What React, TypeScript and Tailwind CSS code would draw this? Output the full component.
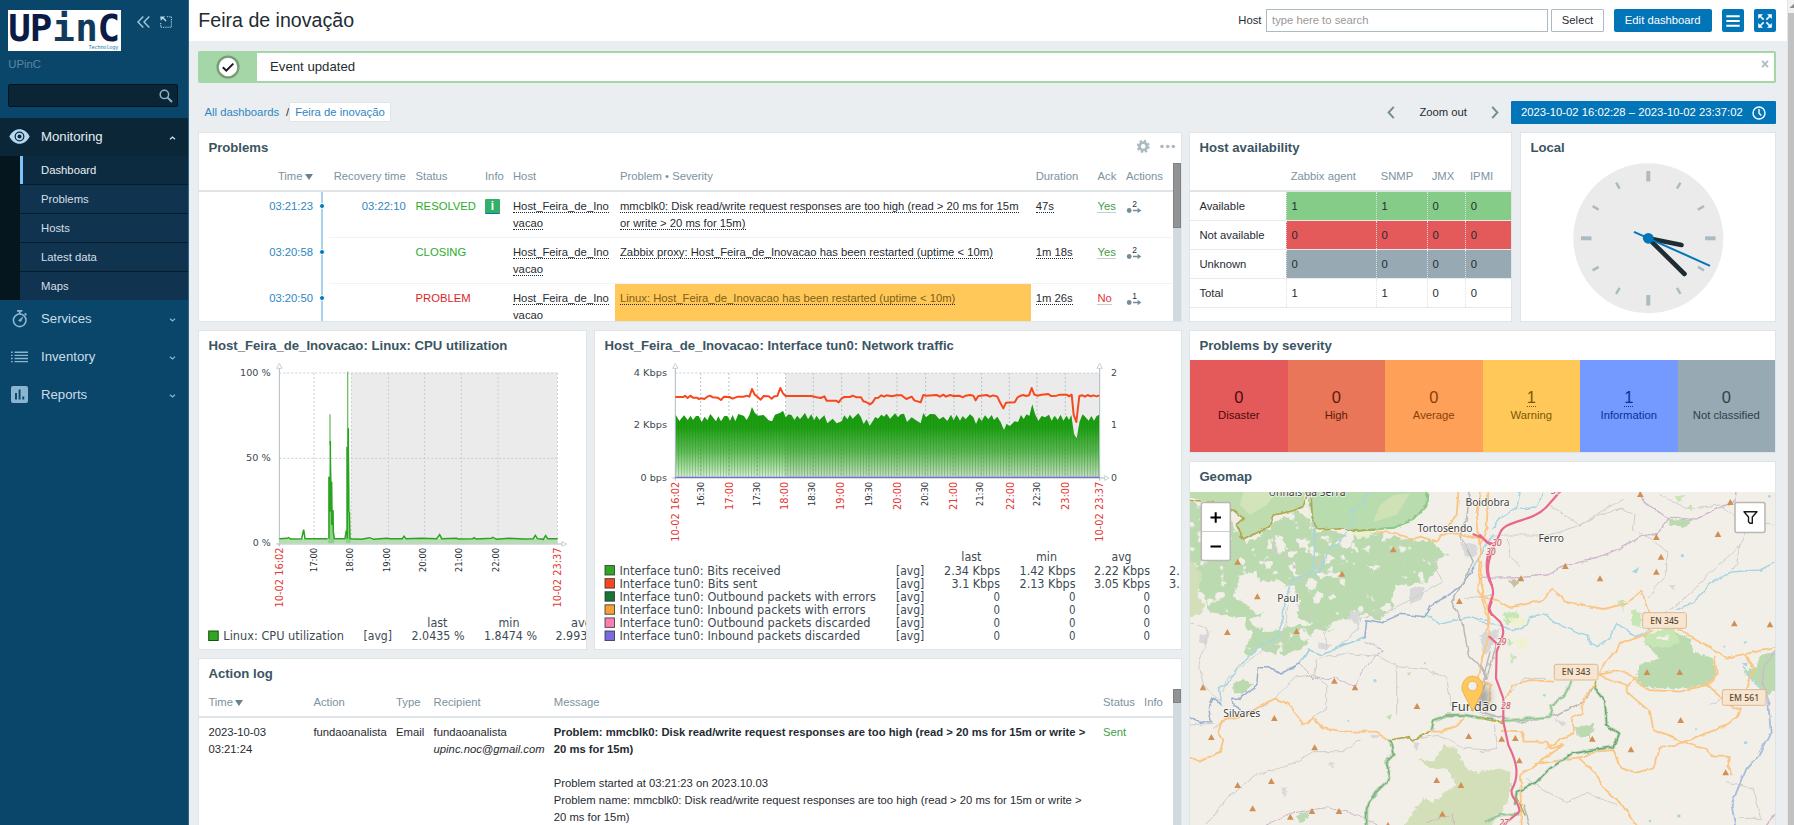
import React from "react";

type Pt = [number, number];

const F = "DejaVu Sans, sans-serif";

function Label({ x, x2, y, s = 12, fill = "#3d4a52", children }: { x: number; x2: number; y: number; s?: number; fill?: string; children: string }) {
  return (
    <text x={x} y={y} fontSize={s} fill={fill} fontFamily={F} textLength={x2 - x} lengthAdjust="spacingAndGlyphs">
      {children}
    </text>
  );
}

function VLabel({ x, y, len, s, fill = "#1f2c33", children }: { x: number; y: number; len: number; s: number; fill?: string; children: string }) {
  return (
    <text transform={`translate(${x} ${y}) rotate(-90)`} fontSize={s} fill={fill} fontFamily={F} textLength={len} lengthAdjust="spacingAndGlyphs">
      {children}
    </text>
  );
}

function Widget({ title, className = "", titleClass = "h-[28px] pt-[6px]", children, tools }: { title: string; className?: string; titleClass?: string; children?: React.ReactNode; tools?: React.ReactNode }) {
  return (
    <section className={`flex shrink-0 flex-col overflow-hidden border border-[#dfe4e7] bg-white ${className}`}>
      <div className={`flex shrink-0 justify-between pl-[9.4px] ${titleClass}`}>
        <h4 className="text-[13.17px] leading-[18px] font-bold whitespace-nowrap text-[#3c5563]">{title}</h4>
        {tools}
      </div>
      {children}
    </section>
  );
}

/* ---------- sidebar ---------- */

function Chevron({ up = false }: { up?: boolean }) {
  return (
    <svg width="7" height="6" viewBox="0 0 7 6" className="mt-[2px] mr-[12px] ml-auto" fill="none" stroke={up ? "#d5e6f1" : "#8db5cf"} strokeWidth="1.2">
      <path d={up ? "M1 4.2 3.5 2 6 4.2" : "M1 1.8 3.5 4 6 1.8"} />
    </svg>
  );
}

function Sidebar() {
  const sub = ["Problems", "Hosts", "Latest data", "Maps"];
  return (
    <aside className="flex w-[189px] shrink-0 flex-col border-r border-[#2d6385] bg-[#0a466a]">
      <div className="flex h-[51px] items-start pt-[10px] pl-[8px]">
        <svg width="113" height="41" viewBox="0 0 113 41">
          <rect width="113" height="41" fill="#fff" />
          <g fontFamily="DejaVu Sans Mono, monospace" fontWeight="bold" fontSize="37.5">
            <text x="0.3" y="31.3" fill="#0a1b45">U</text>
            <text x="21.8" y="31.3" fill="#0a1b45">P</text>
            <text x="44.3" y="31.3" fill="#123a5c">i</text>
            <text x="67.3" y="31.3" fill="#123a5c">n</text>
            <text x="89.5" y="31.3" fill="#0a1b45">C</text>
          </g>
          <text x="80.5" y="38.8" fontSize="5.4" fontFamily="DejaVu Sans Mono, monospace" fill="#2c7fb8" textLength="30">Technology</text>
        </svg>
        <svg width="13" height="12" viewBox="0 0 13 12" className="mt-[5.5px] ml-[16px]" fill="none" stroke="#a5c9e0" strokeWidth="1.4">
          <path d="M6.3.6 1 6l5.3 5.4M12.3.6 7 6l5.3 5.4" />
        </svg>
        <svg width="12" height="12" viewBox="0 0 12 12" className="mt-[5.5px] ml-[10px]">
          <path d="M.2.4h5.2L3.8 1.8l2.8 2.6-1 1-2.8-2.7L.8 4.8z" fill="#b8d6e8" />
          <path d="M7 .8h4.4V11.3H.7V6" fill="none" stroke="#b8d6e8" strokeWidth="1.1" strokeDasharray="1.2 1" />
        </svg>
      </div>
      <div className="mt-[5px] h-[17px] pl-[8.3px] text-[11.3px] leading-[17px] text-[#5c86a1]">UPinC</div>
      <div className="mt-[11px] ml-[8px] flex h-[23px] w-[170px] items-center justify-end rounded-[2px] border border-[#03141f] bg-[#0a2535] pr-[4px]">
        <svg width="14" height="14" viewBox="0 0 14 14" fill="none" stroke="#8fb3ca">
          <circle cx="5.4" cy="5.4" r="4.2" strokeWidth="1.5" />
          <path d="M8.6 8.6 13 13" strokeWidth="2" />
        </svg>
      </div>
      <div className="mt-[11px] flex h-[38px] items-center bg-[#0b2737] pl-[9px] text-[13.2px] text-[#e6eef4]">
        <svg width="21" height="15" viewBox="0 0 21 15" className="mr-[11px] mb-[1px]">
          <path d="M.3 7.5C3 2.5 6.5.2 10.5.2s7.5 2.3 10.2 7.3C18 12.5 14.5 14.8 10.5 14.8S3 12.5.3 7.5z" fill="#b4d8f2" />
          <circle cx="10.5" cy="7.5" r="4.9" fill="#0b2737" />
          <circle cx="10.5" cy="7.5" r="3.7" fill="#b4d8f2" />
          <circle cx="10.5" cy="7.5" r="2" fill="#0b2737" />
        </svg>
        Monitoring
        <Chevron up />
      </div>
      <div className="flex flex-col bg-[#05161f] pl-[20px] text-[11.3px] text-[#d4dfe7]">
        <div className="flex h-[28px] items-center border-l-[3px] border-[#7cc4fa] bg-[#0c2b41] pl-[18px] text-[#e6eef4]">Dashboard</div>
        {sub.map((s) => (
          <div key={s} className="flex h-[29px] items-center border-t border-[#061b29] bg-[#10344f] pl-[21px]">{s}</div>
        ))}
      </div>
      <div className="flex flex-col pt-[0.5px] text-[13.2px] text-[#cbdde9]">
        <div className="flex h-[37.7px] items-center pl-[11px]">
          <svg width="18" height="18" viewBox="0 0 18 18" className="mr-[12px]" fill="none" stroke="#8ab4d0">
            <circle cx="8.7" cy="10.3" r="6.3" strokeWidth="1.6" />
            <path d="M6 .9h5.4M8.7 1v3M13.7 3.4l1.7 1.7" strokeWidth="1.8" />
            <path d="M11.6 7.3 9.8 11.3 7.6 10.6z" fill="#8ab4d0" />
          </svg>
          Services
          <Chevron />
        </div>
        <div className="flex h-[37.7px] items-center pl-[11px]">
          <svg width="18" height="12" viewBox="0 0 18 12" className="mr-[12px]" stroke="#8ab4d0" strokeWidth="1.4">
            <path d="M0 1.3h1.7M0 4.4h1.7M0 7.5h1.7M0 10.6h1.7M3.5 1.3H17M3.5 4.4H17M3.5 7.5H17M3.5 10.6H17" />
          </svg>
          Inventory
          <Chevron />
        </div>
        <div className="flex h-[37.7px] items-center pl-[11px]">
          <svg width="18" height="17" viewBox="0 0 18 17" className="mr-[12px]">
            <rect width="17" height="17" rx="2" fill="#8ab4d0" />
            <path d="M5 7v6.5M8.6 3.5v10M12.3 10.5v3" stroke="#0a466a" strokeWidth="1.9" />
          </svg>
          Reports
          <Chevron />
        </div>
      </div>
    </aside>
  );
}

/* ---------- problems ---------- */

const dotted = "border-b border-dotted border-[#1f2c33]";

function ProblemRow({ time, rec, status, statusClass, info, problem, dur, ack, ackClass, n, warn }: {
  time: string; rec?: string; status: string; statusClass: string; info?: boolean; problem: React.ReactNode; dur: string; ack: string; ackClass: string; n: string; warn?: boolean;
}) {
  const c = "border-b border-[#f0f2f3] pt-[5.5px]";
  return (
    <div className="grid h-[46px] grid-cols-[114px_16px_76.7px_79.3px_28px_102px_416px_66.5px_28.5px_46.5px] leading-[17px]">
      <div className="pt-[5.5px] text-right text-[#2f86c2]">{time}</div>
      <div className="flex items-start pl-[8px]">
        <div className="flex h-full w-[2px] justify-center bg-[#a9d1ec]">
          <div className="mt-[11px] h-[6px] w-[6px] shrink-0 rounded-full border border-white bg-[#0275b8]" />
        </div>
      </div>
      <div className={`${c} text-right text-[#2f86c2]`}>{rec}</div>
      <div className={`${c} pl-[9.8px] ${statusClass}`}>{status}</div>
      <div className={c}>
        {info && (
          <div className="mt-px flex h-[15px] w-[15px] justify-center rounded-[1px] border-b border-[#0275b8] bg-[#34af67] text-[12px] leading-[15px] font-bold text-white">i</div>
        )}
      </div>
      <div className={c}>
        <span className={dotted}>Host_Feira_de_Ino<br />vacao</span>
      </div>
      <div className={`${c} pl-[5px] whitespace-nowrap ${warn ? "bg-[#ffc859] text-[#7d5f17]" : ""}`}>
        <span className={dotted}>{problem}</span>
      </div>
      <div className={`${c} pl-[4.7px]`}><span className={dotted}>{dur}</span></div>
      <div className={c}><span className={`border-b border-[#c3cdd3] ${ackClass}`}>{ack}</span></div>
      <div className={c}>
        <svg width="17" height="15" viewBox="0 0 17 15" className="mt-[2px]">
          <text x="6.2" y="6.8" fontSize="8.5" fontFamily="Liberation Sans, sans-serif" fill="#1f2c33">{n}</text>
          <circle cx="3.2" cy="10.5" r="2.4" fill="#768d99" />
          <path d="M7 10.5h6" stroke="#768d99" strokeWidth="1.5" />
          <path d="M11.6 7.8 15.3 10.5 11.6 13.2z" fill="#768d99" />
        </svg>
      </div>
    </div>
  );
}

function Problems() {
  return (
    <Widget
      title="Problems"
      className="h-[190px]"
      titleClass="h-[30px] pt-[6px]"
      tools={
        <svg width="44" height="18" viewBox="0 0 44 18" fill="none" stroke="#acbbc2">
          <circle cx="6.2" cy="7.4" r="3.7" strokeWidth="2.8" />
          <circle cx="6.2" cy="7.4" r="5.6" strokeWidth="2" strokeDasharray="2.3 2.098" />
          <g fill="#acbbc2" stroke="none"><circle cx="25" cy="7.5" r="1.8" /><circle cx="30.7" cy="7.5" r="1.8" /><circle cx="36.3" cy="7.5" r="1.8" /></g>
        </svg>
      }
    >
      <div className="flex min-h-0 flex-1">
        <div className="w-[973.5px]">
          <div className="grid h-[29px] grid-cols-[114px_16px_76.7px_79.3px_28px_102px_416px_66.5px_28.5px_46.5px] border-b-2 border-[#dfe4e7] pt-[5px] leading-[17px] text-[#7c929e]">
            <div className="flex items-start justify-end gap-[2px]">Time<span className="mt-[6px] mr-[0.5px] border-x-4 border-t-[6px] border-x-transparent border-t-[#6a8290]" /></div>
            <div />
            <div className="text-right whitespace-nowrap">Recovery time</div>
            <div className="pl-[9.8px]">Status</div>
            <div>Info</div>
            <div>Host</div>
            <div className="pl-[5px]">Problem • Severity</div>
            <div className="pl-[4.7px]">Duration</div>
            <div>Ack</div>
            <div>Actions</div>
          </div>
          <ProblemRow time="03:21:23" rec="03:22:10" status="RESOLVED" statusClass="text-[#2aad2a]" info problem={<>mmcblk0: Disk read/write request responses are too high (read &gt; 20 ms for 15m <br />or write &gt; 20 ms for 15m)</>} dur="47s" ack="Yes" ackClass="text-[#429e47]" n="2" />
          <ProblemRow time="03:20:58" status="CLOSING" statusClass="text-[#2aad2a]" problem="Zabbix proxy: Host_Feira_de_Inovacao has been restarted (uptime < 10m)" dur="1m 18s" ack="Yes" ackClass="text-[#429e47]" n="2" />
          <ProblemRow time="03:20:50" status="PROBLEM" statusClass="text-[#dc1f1f]" problem="Linux: Host_Feira_de_Inovacao has been restarted (uptime < 10m)" dur="1m 26s" ack="No" ackClass="text-[#e33734]" n="1" warn />
        </div>
        <div className="flex-1 bg-[#d2dae0]"><div className="h-[65px] border border-[#7f8183] bg-[#919395]" /></div>
      </div>
    </Widget>
  );
}

/* ---------- host availability / clock ---------- */

function Availability() {
  const rows: [string, string, string[]][] = [
    ["Available", "bg-[#86cc89]", ["1", "1", "0", "0"]],
    ["Not available", "bg-[#e45959]", ["0", "0", "0", "0"]],
    ["Unknown", "bg-[#97aab3]", ["0", "0", "0", "0"]],
    ["Total", "", ["1", "1", "0", "0"]],
  ];
  return (
    <Widget title="Host availability" className="w-[323px]" titleClass="h-[30px] pt-[6px]">
      <div className="grid h-[29px] shrink-0 grid-cols-[96px_90px_51px_38.3px_1fr] border-b-2 border-[#dfe4e7] pt-[5px] leading-[17px] text-[#7c929e]">
        <div />
        <div className="pl-[4.7px]">Zabbix agent</div>
        <div className="pl-[4.7px]">SNMP</div>
        <div className="pl-[4.7px]">JMX</div>
        <div className="pl-[4.7px]">IPMI</div>
      </div>
      {rows.map(([name, bg, v]) => (
        <div key={name} className="grid h-[29.1px] shrink-0 grid-cols-[96px_90px_51px_38.3px_1fr] border-b border-[#e6eaec] leading-[29px]">
          <div className="h-[28.1px] pl-[9.4px]">{name}</div>
          {v.map((t, i) => (
            <div key={i} className={`h-[28.1px] border-l border-dotted border-[#dbe2e6] pl-[4.5px] ${bg}`}>{t}</div>
          ))}
        </div>
      ))}
    </Widget>
  );
}

function Clock() {
  const ticks = Array.from({ length: 12 }, (_, i) => i);
  return (
    <Widget title="Local" className="flex-1" titleClass="h-[28px] pt-[6px]">
      <svg width="254" height="160" viewBox="1521 161 254 160">
        <circle cx="1648.3" cy="238.3" r="75" fill="#ebebeb" />
        {ticks.map((i) => (
          <path key={i} transform={`rotate(${i * 30} 1648.3 238.3)`} d={i % 3 === 0 ? "M1648.3 171v10.5" : "M1648.3 174v7"} stroke="#acbbc2" strokeWidth={i % 3 === 0 ? 4 : 2.5} />
        ))}
        <g stroke="#1f2c33" strokeLinecap="round" strokeWidth="4.6">
          <path d="M1648.3 238.3 1681.5 245" />
          <path d="M1648.3 238.3 1684.5 274" />
        </g>
        <path d="M1634 231.8 1710 265.8" stroke="#0275b8" strokeWidth="2" />
        <circle cx="1648.3" cy="238.3" r="5.4" fill="#0275b8" />
      </svg>
    </Widget>
  );
}

/* ---------- graphs ---------- */

function CpuGraph() {
  const v = [372, 484, 595, 704, 814, 924];
  const hours: [string, number][] = [["17:00", 380], ["18:00", 489], ["19:00", 599], ["20:00", 709], ["21:00", 817], ["22:00", 928]];
  return (
    <svg width="387" height="289" viewBox="199 360 387 289">
      <g transform="translate(190 325) scale(.333333)">
        <rect x="484" y="143" width="617" height="513" fill="#ebebeb" />
        <g stroke="#c4ced3" strokeWidth="3" strokeDasharray="6 6">
          <path d="M268 144H1101M268 400H1101M1102 144V655" />
          {v.map((x) => <path key={x} d={`M${x} 144V655`} />)}
        </g>
        <g stroke="#acbbc2" strokeWidth="3" fill="none">
          <path d="M268 130V664M259 657H1116" />
          <path d="M260 130 268 115 276 130zM1116 650 1130 657 1116 664z" fill="#fff" strokeWidth="2" />
        </g>
        <rect x="268" y="642" width="834" height="14" fill="#b8dcb5" />
        <path d="M415 455H419L421 350 426 470 432 640V655H415zM468 365H472L476 310 481 560V655H468z" fill="#8fd08b" />
        <path d="M420 268V360M473 140V370" stroke="#6cc265" strokeWidth="4" />
        <path d="M268 641 292 640 296 638 302 642 335 641 341 614 345 641 413 641M417 455V641M421 348V560M425 470V600M429 555 430 620 433 641 465 641 469 616M472 366V641M475 310V560M478 560 480 641 515 643 539 638 551 643 590 640 600 641 637 641 642 634 648 641 695 640 740 641 749 629 755 641 800 640 805 642 848 641 853 638 858 642 905 640 908 637 920 643 957 640 1000 642 1030 641 1036 631 1042 641 1060 643 1067 632 1073 641 1103 641" fill="none" stroke="#2aa31f" strokeWidth="4.5" />
      </g>
      <Label x={240} x2={270.7} y={376} s={9.3}>100 %</Label>
      <Label x={246} x2={270.7} y={460.5} s={9.3}>50 %</Label>
      <Label x={252.7} x2={270.7} y={546} s={9.3}>0 %</Label>
      {hours.map(([t, x]) => <VLabel key={t} x={190 + x / 3} y={572.3} len={24.6} s={8.5}>{t}</VLabel>)}
      <VLabel x={282.5} y={607.5} len={60} s={10} fill="#e33734">10-02 16:02</VLabel>
      <VLabel x={560.5} y={607.5} len={60} s={10} fill="#e33734">10-02 23:37</VLabel>
      <rect x="208.7" y="631" width="9.5" height="9.5" fill="#33a523" stroke="#14530c" />
      <Label x={223.3} x2={344} y={640} s={11.8}>Linux: CPU utilization</Label>
      <Label x={363.5} x2={392} y={640} s={11.8}>[avg]</Label>
      <Label x={427.3} x2={447.5} y={627} s={11.8}>last</Label>
      <Label x={498.5} x2={519.5} y={627} s={11.8}>min</Label>
      <Label x={571} x2={592} y={627} s={11.8}>avg</Label>
      <Label x={411.5} x2={464.5} y={640} s={11.8}>2.0435 %</Label>
      <Label x={484} x2={537} y={640} s={11.8}>1.8474 %</Label>
      <Label x={555.5} x2={608.5} y={640} s={11.8}>2.9933 %</Label>
    </svg>
  );
}

const sent =
  "16,111 40,111 45,107 53,114 61,107 69,113 82,113 86,117 95,115 103,117 112,110 120,107 128,112 143,113 153,120 162,110 178,111 188,116 203,110 222,110 230,107 238,110 246,87 254,104 262,110 272,119 281,108 296,109 305,116 313,109 322,108 331,84 339,100 347,108 424,108 440,112 452,114 463,109 470,122 498,122 506,127 515,115 523,111 540,111 548,107 560,112 573,112 580,124 588,126 600,133 608,127 616,114 625,113 634,106 642,110 650,106 665,109 680,106 695,106 700,110 709,117 725,110 733,121 752,127 760,105 768,107 800,105 810,110 820,104 828,110 840,105 850,108 868,107 878,112 887,107 900,105 910,107 917,121 925,108 950,105 960,110 970,106 982,110 990,127 1000,145 1008,128 1034,127 1043,112 1052,107 1060,105 1068,108 1077,106 1085,84 1093,104 1101,107 1115,104 1135,102 1143,108 1160,107 1170,104 1190,104 1197,109 1205,104 1211,165 1219,186 1228,108 1237,106 1245,110 1253,105 1262,109 1270,106 1280,109 1288,106";

const received =
  "16,353 16,163 28,183 42,166 53,180 62,167 69,180 78,168 86,168 95,186 104,170 112,181 121,162 138,184 145,169 153,184 163,168 172,168 180,182 188,165 196,184 205,162 222,168 230,180 238,166 246,141 254,158 264,167 281,165 296,181 306,184 315,164 331,158 339,152 347,172 356,163 365,166 373,180 382,167 390,178 405,159 414,178 424,163 432,181 440,167 448,180 463,166 472,190 488,176 500,190 515,184 523,166 532,178 540,164 548,176 565,160 573,172 581,192 590,178 599,198 608,184 616,171 624,176 634,164 642,170 650,161 660,176 668,168 675,160 684,172 692,163 702,161 711,186 725,172 740,182 752,190 760,159 768,172 780,162 795,163 808,178 820,170 832,183 843,164 851,181 860,164 870,182 878,168 887,178 900,163 910,172 918,192 927,172 935,183 945,166 955,178 965,165 972,180 982,170 992,187 1002,210 1010,191 1019,199 1034,184 1044,186 1053,165 1061,177 1070,163 1078,168 1087,133 1095,162 1105,183 1115,168 1125,172 1137,164 1145,182 1154,167 1163,180 1172,164 1180,182 1190,167 1197,180 1204,165 1212,222 1220,235 1229,184 1238,163 1246,171 1256,182 1264,168 1272,182 1280,168 1288,164 1288,353";

function NetGraph() {
  const nx = (x: number) => 590 + x / 2.613;
  const black: Pt[] = [[297, 16], [444, 17], [589, 18], [736, 19], [884, 20], [1028, 21], [1175, 22]];
  const red: Pt[] = [[373, 17], [518, 18], [665, 19], [813, 20], [959, 21], [1107, 22], [1252, 23]];
  const rows: [string, string, number, string[], number][] = [
    ["Interface tun0: Bits received", "#33a523", 498, ["2.34 Kbps", "1.42 Kbps", "2.22 Kbps"], 56],
    ["Interface tun0: Bits sent", "#f7481d", 437, ["3.1 Kbps", "2.13 Kbps", "3.05 Kbps"], 56],
    ["Interface tun0: Outbound packets with errors", "#1c7336", 747, ["0", "0", "0"], 6.5],
    ["Interface tun0: Inbound packets with errors", "#f7a033", 720, ["0", "0", "0"], 6.5],
    ["Interface tun0: Outbound packets discarded", "#fc7eb0", 733, ["0", "0", "0"], 6.5],
    ["Interface tun0: Inbound packets discarded", "#7c6ae0", 706, ["0", "0", "0"], 6.5],
  ];
  return (
    <svg width="585" height="289" viewBox="595 360 585 289">
      <defs>
        <linearGradient id="fade" gradientUnits="userSpaceOnUse" x1="0" y1="160" x2="0" y2="353">
          <stop offset="0" stopColor="#1a9c0f" />
          <stop offset=".22" stopColor="#1e9e14" />
          <stop offset=".6" stopColor="#2aa31f" stopOpacity=".72" />
          <stop offset="1" stopColor="#33a523" stopOpacity=".17" />
        </linearGradient>
        <pattern id="bars" patternUnits="userSpaceOnUse" x="16" width="8.4" height="400">
          <rect width="3" height="400" fill="#128a08" opacity=".35" />
        </pattern>
      </defs>
      <g transform="translate(670 360) scale(.333333)">
        <rect x="347" y="39" width="942" height="314" fill="#ebebeb" />
        <g stroke="#c4ced3" strokeWidth="3" strokeDasharray="6 6">
          <path d="M16 39H1288" />
          {[92, 177, 262, 347, 430, 515, 597, 681, 767, 852, 935, 1018, 1101, 1186].map((x) => <path key={x} d={`M${x} 39V353`} stroke="#b7c4ca" />)}
        </g>
        <polygon points={received} fill="url(#fade)" />
        <polygon points={received} fill="url(#bars)" />
        <g stroke="#acbbc2" strokeWidth="3" fill="#fff">
          <path d="M16 25V362M1289 25V362M7 354H1304" fill="none" />
          <path d="M8 25 16 10 24 25zM1281 25 1289 10 1297 25zM1304 347 1317 354 1304 361z" strokeWidth="2" />
        </g>
        <polyline points={sent} fill="none" stroke="#f7481d" strokeWidth="6" strokeLinejoin="round" />
        <path d="M16 352H1289" stroke="#7c6ae0" strokeWidth="3.5" />
      </g>
      <Label x={633.7} x2={667} y={376} s={9.5}>4 Kbps</Label>
      <Label x={633.7} x2={667} y={428} s={9.5}>2 Kbps</Label>
      <Label x={640.5} x2={667} y={480.5} s={9.5}>0 bps</Label>
      <Label x={1111} x2={1117} y={376} s={9.5}>2</Label>
      <Label x={1111} x2={1117} y={428} s={9.5}>1</Label>
      <Label x={1111} x2={1117} y={480.5} s={9.5}>0</Label>
      {black.map(([x, t]) => <VLabel key={x} x={nx(x)} y={506.3} len={24.6} s={8.3}>{`${t}:30`}</VLabel>)}
      {red.map(([x, t]) => <VLabel key={x} x={nx(x)} y={510} len={28.3} s={9.8} fill="#e33734">{`${t}:00`}</VLabel>)}
      <VLabel x={678.8} y={541.8} len={60} s={10} fill="#e33734">10-02 16:02</VLabel>
      <VLabel x={1102.8} y={541.8} len={60} s={10} fill="#e33734">10-02 23:37</VLabel>
      <Label x={961.3} x2={981.5} y={560.5} s={11.8}>last</Label>
      <Label x={1036} x2={1057} y={560.5} s={11.8}>min</Label>
      <Label x={1111.5} x2={1131.5} y={560.5} s={11.8}>avg</Label>
      {rows.map(([name, color, end, vals, w], i) => {
        const y = 574.5 + i * 13.1;
        return (
          <g key={name}>
            <rect x="605" y={y - 9} width="9.5" height="9.5" fill={color} stroke="#1f2c33" strokeOpacity=".75" />
            <Label x={619.5} x2={nx(end)} y={y} s={11.8}>{name}</Label>
            <Label x={896} x2={924.3} y={y} s={11.8}>[avg]</Label>
            {vals.map((t, k) => {
              const e = [1000, 1075.5, 1150][k];
              return <Label key={k} x={e - (t === "3.1 Kbps" ? 48.5 : w)} x2={e} y={y} s={11.8}>{t}</Label>;
            })}
          </g>
        );
      })}
      <Label x={1169} x2={1187} y={574.5} s={11.8}>2.8</Label>
      <Label x={1169} x2={1187} y={587.6} s={11.8}>3.4</Label>
    </svg>
  );
}

/* ---------- severity ---------- */

function Severity() {
  const items: [string, string, string][] = [
    ["0", "Disaster", "bg-[#e45959] text-[#4b0c0c]"],
    ["0", "High", "bg-[#e97659] text-[#5a1c0b]"],
    ["0", "Average", "bg-[#ffa059] text-[#8a3f07]"],
    ["1", "Warning", "bg-[#ffc859] text-[#7d5706]"],
    ["1", "Information", "bg-[#7499ff] text-[#0c2f9c]"],
    ["0", "Not classified", "bg-[#97aab3] text-[#30404a]"],
  ];
  return (
    <Widget title="Problems by severity" className="h-[123px]" titleClass="h-[29px] pt-[6px]">
      <div className="grid flex-1 grid-cols-6">
        {items.map(([n, l, c]) => (
          <div key={l} className={`flex flex-col items-center pt-[27.5px] ${c}`}>
            <span className={`h-[19px] text-[16.5px] leading-[19px] ${n === "1" ? "border-b border-dotted border-current" : ""}`}>{n}</span>
            <span className="leading-[17px]">{l}</span>
          </div>
        ))}
      </div>
    </Widget>
  );
}

/* ---------- geomap ---------- */

const peaksLeft: Pt[] = [[173, 230], [232, 334], [142, 441], [350, 438], [486, 266], [640, 193], [838, 348], [69, 607], [463, 587], [525, 607], [711, 663], [283, 699], [94, 756], [404, 787], [866, 753], [173, 900], [274, 888], [218, 970], [331, 995], [396, 978], [477, 978], [770, 885], [843, 900], [787, 986], [624, 1020]];
const peaksRight: Pt[] = [[481, 27], [751, 51], [529, 156], [714, 147], [543, 215], [529, 260], [256, 243], [123, 280], [360, 280], [763, 415], [870, 418], [501, 561], [599, 561], [602, 705], [65, 761], [106, 759], [337, 761], [453, 793], [118, 826], [737, 862]];

function Peaks({ at }: { at: Pt[] }) {
  return <g fill="#d08f55">{at.map(([x, y]) => <path key={`${x}-${y}`} d={`M${x} ${y - 9} ${x + 10} ${y + 9}H${x - 10}z`} />)}</g>;
}

function Badge({ x, y, w, children }: { x: number; y: number; w: number; children: string }) {
  return (
    <g>
      <rect x={x} y={y} width={w} height="47" rx="5" fill="#f7e5d0" stroke="#dcb996" strokeWidth="3" />
      <text x={x + w / 2} y={y + 33} textAnchor="middle" fontSize="26" fontFamily="Noto Sans, sans-serif" fontWeight="500" fill="#5d4a33">{children}</text>
    </g>
  );
}

const places: [string, number, number, number, number][] = [
  ["Unhais da Serra", 1268.5, 495.7, 77, 10.3],
  ["Tortosendo", 1417.5, 532, 55, 10.3],
  ["Boidobra", 1465.5, 506, 44, 10.3],
  ["Ferro", 1538.5, 541.5, 25.5, 10.3],
  ["Paul", 1277.3, 601.5, 21, 10.3],
  ["Silvares", 1223.3, 717, 37, 10.3],
  ["Fundão", 1451, 710.5, 46, 13],
];

function GeoMap() {
  return (
    <svg width="585" height="333" viewBox="1190 492 585 333" fill="none" strokeLinejoin="round" strokeLinecap="round">
      <defs>
        <filter id="rough" x="-5%" y="-5%" width="110%" height="110%">
          <feTurbulence type="fractalNoise" baseFrequency=".07" numOctaves="3" seed="4" />
          <feDisplacementMap in="SourceGraphic" scale="18" xChannelSelector="R" yChannelSelector="G" />
        </filter>
        <filter id="speckle" x="-5%" y="-5%" width="110%" height="110%">
          <feTurbulence type="fractalNoise" baseFrequency=".028" numOctaves="3" seed="12" result="n" />
          <feColorMatrix in="n" type="matrix" values="0 0 0 0 0  0 0 0 0 0  0 0 0 0 0  14 0 0 0 -8.9" result="holes" />
          <feDisplacementMap in="SourceGraphic" in2="n" scale="36" xChannelSelector="G" yChannelSelector="B" result="edge" />
          <feComposite in="edge" in2="holes" operator="out" />
        </filter>
        <filter id="wiggle" x="-5%" y="-5%" width="110%" height="110%">
          <feTurbulence type="fractalNoise" baseFrequency=".035" numOctaves="2" seed="9" />
          <feDisplacementMap in="SourceGraphic" scale="14" xChannelSelector="R" yChannelSelector="G" />
        </filter>
        <filter id="soft" x="-60%" y="-60%" width="220%" height="220%"><feGaussianBlur stdDeviation="4" /></filter>
      </defs>
      <rect x="1190" y="492" width="585" height="333" fill="#f2efe9" />
      <g transform="translate(1180 485) scale(.333333)">
        <g filter="url(#speckle)">
          <path d="M0 50 70 55 150 85 165 125 190 168 270 130 300 100 350 80 400 105 410 135 500 140 470 175 500 190 520 150 600 140 680 170 740 160 800 210 770 240 740 290 640 300 640 370 600 400 560 390 500 400 440 420 430 440 470 430 400 440 385 470 360 490 330 510 290 510 240 490 210 515 190 500 215 440 190 400 140 390 90 380 80 340 40 300 0 300z" fill="#bcdab0" />
        </g>
        <path d="M30 20H375L370 70 330 80 280 90 265 125 190 165 165 120 190 100 165 80 60 45 30 38z" fill="#bfdcae" />
        <path d="M190 20 180 60 210 90 260 60 290 20z" fill="#d3e3ba" />
        <path d="M395 20H742L740 60 700 105 640 128 520 138 490 128 410 132 397 100z" fill="#b9dcae" />
        <path d="M600 60 640 30 690 25 650 90 580 110z" fill="#cfe2b6" />
        <g filter="url(#rough)">
          <path d="M22 210 65 270 50 330 75 360 60 390 22 400z" fill="#d3dfb8" />
          <g fill="#f2efe9">
            <path d="M180 270 230 260 240 290 300 285 320 300 300 350 270 375 230 390 200 360 165 330z" />
            <path d="M300 310 340 300 360 350 350 395 400 420 350 420 310 430 280 440 250 440 240 400z" />
            <path d="M285 150 310 155 315 200 290 205zM350 160 390 165 380 185 355 185zM440 205 465 220 430 240zM560 240 600 250 575 258zM385 280 405 280 395 320 375 305z" />
          </g>
          <path d="M160 600 190 582 220 600 190 625 160 625zM345 990 385 980 385 1000 360 1018z" fill="#bcdab0" />
          <path d="M710 820 760 830 790 780 830 790 850 840 880 860 940 870 940 1040H660L700 980 730 940 760 950 830 900 800 850 750 850z" fill="#d3dfb8" />
          <path d="M510 145 560 138 590 148 540 162zM375 40 390 60 398 150 387 100z" fill="#eaf0cd" />
        </g>
        <g fill="#d9d8d8" filter="url(#rough)">
          <path d="M690 310 735 305 725 345 690 355zM510 380 545 380 535 420 505 400zM415 470 455 480 440 495 415 490zM60 450 90 440 80 480 58 470zM840 170 890 180 890 210 860 220zM570 745 600 750 580 765zM695 770 720 775 710 795zM445 830 465 835 455 848zM305 905 320 910 312 935z" />
        </g>
        <g filter="url(#wiggle)">
          <g stroke="#cfcecd" strokeWidth="3">
            <path d="M30 412 80 430 75 480 55 530 70 600 120 650M130 620 140 580 190 540 240 500 300 470 320 400 325 310 400 260 450 190 500 150M285 160 280 200 330 230 360 250M350 360 400 400 435 450 440 480M480 480 530 440 540 400 620 380 700 340 790 290 765 250 770 200M420 520 500 505 600 515 650 545 740 555 800 580 815 660M650 545 650 690M400 580 410 520M100 730 140 700 260 660 350 575 400 570 440 600 440 670 400 700M80 1020 140 940 230 870 330 840 400 800 490 800 545 760M720 760 780 750 850 790 930 795M850 340 940 330M30 720 100 715" />
          </g>
          <path d="M260 1018 330 985 440 968 520 985 560 1000 590 1018M360 540 400 580 470 580 525 605 550 550 610 495 555 470M740 1010 820 990 820 1020" stroke="#cdb5cc" strokeWidth="3" strokeDasharray="12 4" />
          <path d="M570 20 545 60 515 80 520 115 480 170 445 190 420 262H400L405 160 385 20M400 262 340 285 312 350 310 400 290 460 240 480 210 510 170 550 140 600 118 605 125 660M940 150 910 190 880 250M930 412 870 395 780 418 740 390" stroke="#a6d5e3" strokeWidth="4.5" />
          <path d="M555 455 490 480 425 510 385 495 360 535" stroke="#a0d2e2" strokeWidth="5" />
          <path d="M880 250 850 295 800 335 750 360 735 395 660 388 600 415 560 407 555 455M360 535 300 567 265 545 235 545 230 600 180 640 155 640 160 665 180 675M125 660 100 640 85 670 95 710 60 712 22 690" stroke="#98b0cf" strokeWidth="4.5" />
          <path d="M870 20 860 100 840 150 880 230 850 290 815 350 850 420 865 510 915 560 915 600 880 650M930 500 915 560" stroke="#bab8b6" strokeWidth="4.5" />
          <path d="M22 815 60 830 120 800 130 765 115 740 125 705 200 690 250 660 285 640 320 655 360 700 370 720 400 700 430 730 500 740 590 740 630 765M740 740 790 740 830 720 850 700M590 140 650 145 690 165 720 155 770 170 780 150 830 145 900 160M835 20 830 90 790 140M900 20 890 80 900 200 895 310 925 400 910 500 895 590 935 600 920 680" stroke="#fbc684" strokeWidth="5.5" />
          <path d="M755 735 760 710 800 690 850 690 940 705M630 765 640 810 620 830 630 880 590 920 560 970 560 1020" stroke="#b8d8b3" strokeWidth="10" />
          <path d="M755 735 760 710 800 690 850 690 940 705M630 765 640 810 620 830 630 880 590 920 560 970 560 1020" stroke="#7dae7f" strokeWidth="4" />
          <path d="M740 60 742 20M740 60 700 105 640 128 520 138" stroke="#8cc986" strokeWidth="6" />
          <path d="M22 42 60 48 110 55 165 80 190 100 167 120 190 165 265 125 280 90 330 80 370 62 385 20M393 20 397 100 412 132 490 128 520 138 580 135M630 765 690 755 700 765 750 740" stroke="#b0aa50" strokeWidth="5" />
        </g>
        <path d="M880 148 910 160 930 178M935 190C915 215 915 270 935 300M935 350 928 370 935 390" stroke="#e8688c" strokeWidth="6.5" />
        <g fill="#a6d5e3"><circle cx="585" cy="587" r="5" /><circle cx="735" cy="535" r="3" /><circle cx="505" cy="707" r="3" /></g>
        <g fill="#bfe0ad"><path d="M618 695 636 688 630 704zM680 565 693 560 688 572z" /></g>
        <Peaks at={peaksLeft} />
      </g>
      <g transform="translate(1480 485) scale(.333333)">
        <g filter="url(#rough)">
          <path d="M490 470 560 430 630 460 640 500 700 520 705 570 690 600 580 610 500 610 470 590 475 540 540 520zM840 510 890 500V620L860 630 830 600 790 560 830 545zM285 725 345 715 330 760 290 750zM560 105 640 100 620 125 570 120z" fill="#bcdab0" />
          <path d="M490 450 580 430 600 470 560 490 500 480zM455 375 485 385 480 430 455 420zM415 345 435 345 430 380zM70 385 110 380 120 400 80 420z" fill="#c6e6b4" />
          <path d="M0 860 50 850 95 860 90 930 60 990 0 1000z" fill="#d3dfb8" />
          <path d="M85 285 120 285 105 310z" fill="#c4c39c" />
          <path d="M85 400 140 400 130 430 100 425zM110 460 145 465 135 495 110 490z" fill="#eff1d0" />
          <path d="M585 35 615 30 600 50zM625 60 640 65 630 80zM95 505 110 515 95 535zM85 460 100 470 85 480z" fill="#c6e6b4" />
          <path d="M0 450 60 430 50 460 20 510 10 500zM565 300 590 300 580 320zM220 700 260 715 250 725z" fill="#d9d8d8" />
          <path d="M535 455 570 450 560 465 530 465z" fill="#f2efe9" />
        </g>
        <g filter="url(#wiggle)">
          <path d="M30 150 70 150 210 150 300 120 430 40M210 60 250 90 300 120M85 160 90 210 120 245M505 335 560 270 560 200 520 165 460 135 465 90 420 70 350 95 300 120M555 385 640 320 690 260 750 210 780 180 800 130 830 110M780 180 770 235 750 255M540 30 620 70 720 60 760 90 880 120M90 620 130 580 200 580M140 880 200 920 260 950 320 925 410 960M740 890 820 910 845 1000 780 1000M690 660 720 645M40 720 50 790 0 800M0 690 100 700" stroke="#cfcecd" strokeWidth="3" />
          <path d="M0 280 120 278 200 270 255 242 330 225 420 190 480 155 530 145 565 100 650 102 700 75 765 50 768 20M565 100 490 50 478 20M886 500 850 545 850 600 870 660M886 990 860 1020" stroke="#cdb5cc" strokeWidth="4" strokeDasharray="16 4 3 4" />
          <path d="M890 230 840 255 760 260 690 295 640 350 590 375M0 410 60 420 100 438 140 420 150 395 200 385 210 405 250 425 300 445 325 450 330 475 355 485 390 460 410 415 470 455 510 435M35 130 60 100 110 70 120 20M190 20 170 70 120 70M790 545 815 580 850 620 865 655" stroke="#a6d5e3" strokeWidth="4.5" />
          <path d="M865 655 872 740 835 810 800 850 770 920 755 960 765 1020" stroke="#a8bedb" strokeWidth="5.5" />
          <path d="M0 540 20 580 50 480M0 680 120 712 230 690 300 655 345 605M130 960 150 1020" stroke="#bab8b6" strokeWidth="4.5" />
          <path d="M0 335 50 345 90 368 190 345 215 310 255 350 370 372 440 355 485 318 505 380 540 420 600 435 680 480 740 518 890 488M520 440 425 475 370 540 355 570 400 560 440 560 470 590 500 615 600 620 680 600 710 570 705 515M355 570 440 600 470 580M680 600 760 670 780 670 770 700 730 725 610 772 520 732 510 680 440 620 440 600M795 510 825 550 800 610M610 772 680 795 700 815 750 815 740 840 755 865M345 600 310 640 305 685 275 700 280 745 250 760 200 790M80 640 95 600 150 585 220 590M65 735 130 740 130 770 200 770 215 790 250 780 180 830 120 870 125 1020M180 835 310 815 350 800 400 795 425 850 470 862 520 850 540 790 610 772M295 820 350 870 380 920 420 950 470 1025M25 20 20 130 0 180M0 230 5 300 25 380 25 460 5 520" stroke="#fbc684" strokeWidth="5.5" />
          <path d="M15 1010 60 990 115 985M105 960 110 920 165 895 210 850 280 805 400 785 415 745 380 720 375 650 345 612M70 708 210 695 215 660 250 640 270 590" stroke="#c2ddbd" strokeWidth="10" />
          <path d="M105 960 110 920 165 895 210 850 280 805 400 785 415 745 380 720 375 650 345 612" stroke="#6ea577" strokeWidth="4.5" />
          <path d="M15 1010 60 990 115 985M70 708 210 695 215 660 250 640 270 590" stroke="#95c497" strokeWidth="4.5" />
          <path d="M0 700 70 712M345 612 350 590M110 940 135 990" stroke="#b5b04c" strokeWidth="5" />
        </g>
        <path d="M240 20 200 65C160 110 80 105 62 140L38 195C15 250 25 270 35 300 50 340 20 350 28 380L60 410C80 440 65 460 50 500L48 580 70 640V710L85 780C110 830 120 870 95 915 90 940 120 950 118 980L70 1020M0 150 20 172 38 176M28 455 50 475" stroke="#e8688c" strokeWidth="6.5" />
        <g fill="#a6d5e3"><path d="M455 260 478 245 470 265zM790 470 802 468 795 478zM785 535 803 533 800 545z" /><circle cx="607" cy="212" r="5" /><circle cx="193" cy="631" r="4" /><circle cx="797" cy="773" r="5" /><circle cx="597" cy="993" r="5" /><circle cx="648" cy="733" r="3" /><circle cx="733" cy="485" r="3" /><circle cx="510" cy="1008" r="4" /><circle cx="868" cy="34" r="4" /></g>
        <Peaks at={peaksRight} />
        <Badge x={488} y={383} w={131}>EN 345</Badge>
        <Badge x={223} y={538} w={131}>EN 343</Badge>
        <Badge x={727} y={614} w={131}>EM 561</Badge>
        <g fontFamily="Noto Sans, sans-serif" fontStyle="italic" fontSize="26" fill="#c94a60" stroke="#f2efe9" strokeWidth="4" paintOrder="stroke">
          <text x="36" y="183">30</text><text x="18" y="211">30</text><text x="50" y="481">29</text><text x="63" y="672">28</text><text x="58" y="1022">27</text><text x="213" y="28">31</text>
        </g>
      </g>
      <ellipse cx="1483" cy="697" rx="6" ry="11" fill="#444" opacity=".5" filter="url(#soft)" />
      <g fontFamily="Noto Sans, sans-serif" fill="#3f3f3f" stroke="#fff" strokeOpacity=".75" strokeWidth="1.6" paintOrder="stroke">
        {places.map(([name, x, y, len, size]) => (
          <text key={name} x={x} y={y} fontSize={size} textLength={len} lengthAdjust="spacingAndGlyphs">{name}</text>
        ))}
      </g>
      <path d="M1472.5 711 1463.6 693.5C1461 689 1461.5 684 1465 679.5 1469 675 1476 675 1480 679.5 1483.5 684 1484 689 1481.4 693.5z" fill="#ffc859" stroke="#e7ab3a" strokeWidth=".8" />
      <circle cx="1472.5" cy="686" r="4.8" fill="#f2efe9" stroke="#c9a24c" strokeWidth=".6" />
      <rect x="1201.3" y="502.5" width="29" height="58" rx="2" fill="#fff" stroke="#b8b7b3" strokeWidth="1.5" />
      <path d="M1202 531.5h27.5" stroke="#ccc" strokeWidth="1" />
      <path d="M1210.5 517.5h10.5M1215.7 512.2v10.5M1210.5 546.5h10.5" stroke="#000" strokeWidth="2" strokeLinecap="butt" />
      <rect x="1735" y="502.5" width="30" height="30" rx="2" fill="#fff" stroke="#b8b7b3" strokeWidth="1.5" />
      <path d="M1744 511.8h13l-4.7 5.2v6.3h-2.3l-1.5-1.5v-4.8z" stroke="#1a1a1a" strokeWidth="1.4" />
    </svg>
  );
}

/* ---------- action log ---------- */

function ActionLog() {
  const cols = "grid grid-cols-[105px_82.7px_37.5px_120.2px_549.3px_41px_1fr] pl-[9.4px]";
  return (
    <Widget title="Action log" className="h-[200px]" titleClass="h-[30px] pt-[6px]">
      <div className="flex min-h-0 flex-1">
        <div className="w-[973.5px]">
          <div className={`${cols} h-[29px] border-b-2 border-[#dfe4e7] pt-[5px] leading-[17px] text-[#7c929e]`}>
            <div className="flex items-start gap-[2px]">Time<span className="mt-[6px] border-x-4 border-t-[6px] border-x-transparent border-t-[#6a8290]" /></div>
            <div>Action</div><div>Type</div><div>Recipient</div><div>Message</div><div>Status</div><div>Info</div>
          </div>
          <div className={`${cols} pt-[5.5px] leading-[17px]`}>
            <div>2023-10-03<br />03:21:24</div>
            <div>fundaoanalista</div>
            <div>Email</div>
            <div>fundaoanalista<br /><i>upinc.noc@gmail.com</i></div>
            <div className="whitespace-nowrap">
              <b>Problem: mmcblk0: Disk read/write request responses are too high (read &gt; 20 ms for 15m or write &gt;<br />20 ms for 15m)</b>
              <br /><br />
              Problem started at 03:21:23 on 2023.10.03<br />
              Problem name: mmcblk0: Disk read/write request responses are too high (read &gt; 20 ms for 15m or write &gt;<br />
              20 ms for 15m)
            </div>
            <div className="text-[#429e47]">Sent</div>
            <div />
          </div>
        </div>
        <div className="flex-1 bg-[#d2dae0]"><div className="h-[14px] border border-[#7f8183] bg-[#919395]" /></div>
      </div>
    </Widget>
  );
}

/* ---------- page ---------- */

function Header() {
  return (
    <header className="flex h-[41px] shrink-0 items-center bg-white pr-[11px] pl-[9.3px]">
      <h1 className="flex-1 text-[19.6px] leading-[23px] text-[#1f2c33]">Feira de inovação</h1>
      <label className="mr-[4.5px]">Host</label>
      <div className="flex h-[23px] w-[282px] items-center border border-[#acbbc2] pl-[5px] text-[#999]">type here to search</div>
      <button className="ml-[3px] h-[23px] w-[53px] rounded-[1px] border border-[#acbbc2] bg-white">Select</button>
      <button className="ml-[9.5px] h-[23px] w-[98.5px] rounded-[2px] bg-[#0275b8] text-white">Edit dashboard</button>
      <button className="ml-[9.5px] flex h-[23px] w-[22.5px] items-center justify-center rounded-[2px] bg-[#0275b8]">
        <svg width="14" height="12" viewBox="0 0 14 12" stroke="#fff" strokeWidth="2"><path d="M.3 1.2h13.4M.3 6h13.4M.3 10.8h13.4" /></svg>
      </button>
      <button className="ml-[9.5px] flex h-[23px] w-[22.5px] items-center justify-center rounded-[2px] bg-[#0275b8]">
        <svg width="14" height="14" viewBox="0 0 14 14" fill="#fff" stroke="#fff" strokeWidth="1.6">
          <path d="M2 2 5.6 5.6M12 2 8.4 5.6M2 12 5.6 8.4M12 12 8.4 8.4" />
          <path stroke="none" d="M.2.2H5L.2 5zM13.8.2H9l4.8 4.8zM.2 13.8H5L.2 9zM13.8 13.8H9L13.8 9z" />
        </svg>
      </button>
    </header>
  );
}

export default function App() {
  return (
    <div className="flex h-[825px] w-[1794px] overflow-hidden bg-[#ebeef0] font-['Liberation_Sans',Arial,sans-serif] text-[11.28px] text-[#1f2c33]">
      <Sidebar />
      <div className="flex min-w-0 flex-1 flex-col">
        <Header />
        <div className="mt-[10px] mr-[11px] ml-[9px] flex h-[32px] shrink-0 rounded-[2px] border-2 border-[#a5d6a7] bg-white">
          <div className="flex w-[57px] items-center justify-center bg-[#a5d6a7] pr-[1.5px]">
            <svg width="24" height="24" viewBox="0 0 24 24">
              <circle cx="12" cy="12" r="10.4" fill="#fff" stroke="#769d78" strokeWidth="2.3" />
              <path d="M6.8 12.3 10.3 15.7 17.3 8.6" fill="none" stroke="#1a1a1a" strokeWidth="2" />
            </svg>
          </div>
          <div className="flex-1 pl-[13px] text-[13.2px] leading-[27px]">Event updated</div>
          <svg width="8" height="8" viewBox="0 0 8 8" className="mt-[6.5px] mr-[5px]" stroke="#acbbc2" strokeWidth="1.8"><path d="M1 .8 7 7.2M7 .8 1 7.2" /></svg>
        </div>
        <div className="mt-[18px] mr-[11px] ml-[9px] flex h-[23px] shrink-0 items-center">
          <span className="mb-px ml-[6.5px] text-[#2f86c2]">All dashboards</span>
          <span className="ml-[7px]">/</span>
          <span className="mb-px flex h-[20px] items-center rounded-[1px] border border-[#dfe4e7] bg-white px-[5px] text-[#2f86c2]">Feira de inovação</span>
          <svg width="8" height="13" viewBox="0 0 8 13" className="ml-auto" fill="none" stroke="#768d99" strokeWidth="2"><path d="M6.8.8 1.6 6.5l5.2 5.7" /></svg>
          <span className="ml-[24px]">Zoom out</span>
          <svg width="8" height="13" viewBox="0 0 8 13" className="ml-[24px]" fill="none" stroke="#768d99" strokeWidth="2"><path d="M1.2.8 6.4 6.5l-5.2 5.7" /></svg>
          <div className="ml-[12px] flex h-[23px] w-[265px] items-center rounded-[1px] bg-[#0275b8] px-[10px] whitespace-nowrap text-white">
            2023-10-02 16:02:28 – 2023-10-02 23:37:02
            <svg width="14" height="14" viewBox="0 0 14 14" className="ml-auto" fill="none" stroke="#fff" strokeWidth="1.4"><circle cx="7" cy="7" r="6" /><path d="M7 3v4.2l2.3 2.3" /></svg>
          </div>
        </div>
        <div className="mt-[8px] mr-[11px] ml-[9px] flex min-h-0 flex-1 gap-[7px] overflow-hidden">
          <div className="flex w-[984px] shrink-0 flex-col gap-[8px]">
            <Problems />
            <div className="flex h-[320px] shrink-0 gap-[7px]">
              <Widget title="Host_Feira_de_Inovacao: Linux: CPU utilization" className="w-[389px]" titleClass="h-[29px] pt-[6px]"><CpuGraph /></Widget>
              <Widget title="Host_Feira_de_Inovacao: Interface tun0: Network traffic" className="w-[588px]" titleClass="h-[29px] pt-[6px]"><NetGraph /></Widget>
            </div>
            <ActionLog />
          </div>
          <div className="flex w-[587px] shrink-0 flex-col gap-[8px]">
            <div className="flex h-[190px] shrink-0 gap-[8px]">
              <Availability />
              <Clock />
            </div>
            <Severity />
            <Widget title="Geomap" className="h-[372px]" titleClass="h-[30px] pt-[6px]"><GeoMap /></Widget>
          </div>
        </div>
      </div>
      <div className="flex w-[7px] shrink-0 flex-col border-l border-[#e6e6e6] bg-[#f1f1f1]">
        <svg width="6" height="13" viewBox="0 0 6 13"><path d="M1.5 8 6 3.8V8z" fill="#8a8a8a" /></svg>
        <div className="flex-1 bg-[#c1c1c1]" />
      </div>
    </div>
  );
}
